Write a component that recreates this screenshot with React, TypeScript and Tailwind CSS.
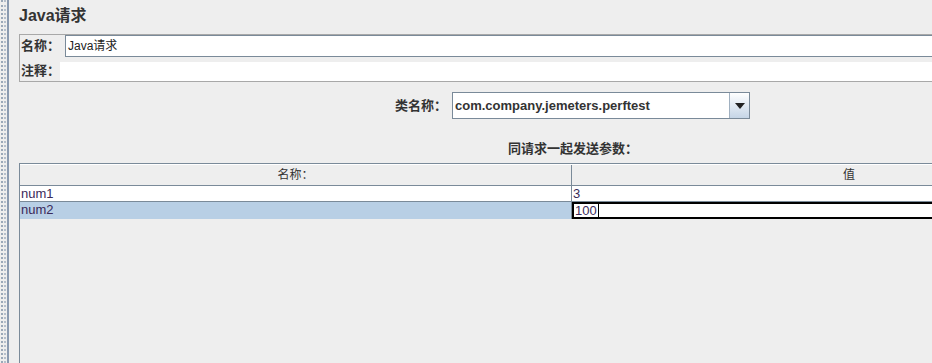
const font = "font-['Liberation_Sans','Noto_Sans_CJK_SC',sans-serif]"

export default function App() {
  return (
    <div className={`w-[932px] h-[363px] overflow-hidden bg-[#eeeeee] flex ${font} text-[#333]`}>
      {/* left splitter edge */}
      <div className="w-[7px] shrink-0 flex">
        <div className="w-[2px] ml-[1px] border-l-2 border-dotted border-[#9aa8b8]" />
        <div className="w-[2px] ml-[1px] border-l-2 border-dotted border-[#b5bfcb]" />
      </div>
      <div className="w-[2px] shrink-0 bg-[#8a9ab0]" />

      <div className="flex-1 min-w-0 pl-[10px] flex flex-col">
        <div className="h-[34px] pt-[5px] text-[16px] font-bold leading-[22px] text-[#333]">Java请求</div>

        {/* name / comment box */}
        <div className="w-[960px] border border-[#a8a8a8] flex flex-col">
          <div className="flex items-center h-[22px]">
            <span className="w-[45px] pl-[1px] text-[13px] font-bold">名称：</span>
            <div className="flex-1 h-[22px] bg-white border border-[#7a8a99] flex items-center pl-[2px] text-[12px] text-[#222]">
              Java请求
            </div>
          </div>
          <div className="flex items-center h-[24px] pt-[4px]">
            <span className="w-[40px] pl-[1px] text-[13px] font-bold">注释：</span>
            <div className="flex-1 h-[19px] bg-white" />
          </div>
        </div>

        {/* class name combo */}
        <div className="flex items-center mt-[10px] h-[27px] pl-[376px]">
          <span className="w-[57px] text-[13px] font-bold">类名称：</span>
          <div className="w-[298px] h-[27px] border border-[#7a8a99] bg-white flex">
            <div className="flex-1 flex items-center pl-[2px] text-[13px] font-bold text-[#333] border-r border-[#a0b0c0]">
              com.company.jemeters.perftest
            </div>
            <div className="w-[19px] flex items-center justify-center bg-gradient-to-b from-white to-[#c5d5e6]">
              <svg width="10" height="6" viewBox="0 0 10 6">
                <path d="M0 0H10L5 6Z" fill="#222" />
              </svg>
            </div>
          </div>
        </div>

        <div className="h-[44px] pt-[22px] pl-[489px] text-[13px] font-bold leading-[16px]">同请求一起发送参数：</div>

        {/* arguments table */}
        <div className="flex-1 w-[1110px] border-l border-t border-[#7a8a99] flex flex-col">
          <div className="grid grid-cols-[552px_554px] h-[22px] border-b border-[#7a8a99] border-t border-t-white">
            <div className="flex items-center justify-center text-[12px] border-r border-[#7a8a99]">名称：</div>
            <div className="flex items-center justify-center text-[12px]">值</div>
          </div>
          <div className="grid grid-cols-[552px_554px] h-[16px] bg-white border-b border-[#7a8a99] text-[13px] leading-[15px] text-[#3a2a5a]">
            <div className="pl-[1px] border-r border-[#7a8a99]">num1</div>
            <div className="pl-[1px]">3</div>
          </div>
          <div className="grid grid-cols-[552px_554px] h-[17px] border-b border-[#7a8a99] text-[13px] leading-[15px] text-[#3a2a5a]">
            <div className="pl-[1px] bg-[#b8cfe5] border-r border-[#7a8a99]">num2</div>
            <div className="bg-white border-2 border-black flex items-center">
              <span className="pl-[1px] pr-[1px] leading-[13px] border-r border-black">100</span>
            </div>
          </div>
        </div>
      </div>
    </div>
  )
}
